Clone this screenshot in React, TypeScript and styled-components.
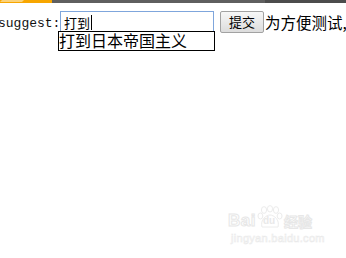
import React from "react";
import styled, { createGlobalStyle } from "styled-components";

const GlobalStyle = createGlobalStyle`
  html, body {
    margin: 0;
    padding: 0;
    background: #fff;
    overflow: hidden;
  }
  body {
    font-family: "Noto Sans CJK SC", "DejaVu Sans", sans-serif;
    color: #000;
  }
`;

const stripParts = [
  { color: "#f7a600", width: 52 },
  { color: "#5f5f5f", width: 213 },
  { color: "#4c4c4c", width: 81 },
];

export default function App() {
  return (
    <Page>
      <GlobalStyle />
      <TopStrip>
        <Flare />
        {stripParts.map((p, i) => (
          <StripPart key={i} $color={p.color} $width={p.width} />
        ))}
      </TopStrip>
      <FormRow>
        <Label>suggest:</Label>
        <InputWrap>
          <FakeInput>
            打到
            <Caret />
          </FakeInput>
          <Suggestions>
            <SuggestItem>打到日本帝国主义</SuggestItem>
          </Suggestions>
        </InputWrap>
        <SubmitButton>提交</SubmitButton>
        <Note>为方便测试,</Note>
      </FormRow>
      <Watermark>
        <LogoLine>
          <BaiText>Bai</BaiText>
          <Paw>
            <svg width="26" height="24" viewBox="0 0 26 24">
              <g fill="none" stroke="#e8e8e8" strokeWidth="1">
                <ellipse cx="7" cy="5" rx="2.6" ry="3.4" />
                <ellipse cx="13" cy="3.8" rx="2.6" ry="3.2" />
                <ellipse cx="19" cy="5" rx="2.6" ry="3.4" />
                <ellipse cx="3.4" cy="11" rx="2.4" ry="3" />
                <ellipse cx="22.6" cy="11" rx="2.4" ry="3" />
                <path d="M5 22 C3 15 9 10 13 10 C17 10 23 15 21 22 Z" />
              </g>
            </svg>
            <DuText>du</DuText>
          </Paw>
          <JingText>经验</JingText>
        </LogoLine>
        <SiteText>jingyan.baidu.com</SiteText>
      </Watermark>
    </Page>
  );
}

const Page = styled.div`
  position: relative;
  width: 346px;
  height: 258px;
  overflow: hidden;
`;

const TopStrip = styled.div`
  position: relative;
  display: flex;
  height: 3px;
  overflow: hidden;
`;

const StripPart = styled.div<{ $color: string; $width: number }>`
  flex: none;
  width: ${(p) => p.$width}px;
  background: ${(p) => p.$color};
`;

const Flare = styled.div`
  position: absolute;
  left: 4px;
  top: -6px;
  width: 22px;
  height: 8px;
  background: #fbd27a;
  transform: skewX(-45deg);
`;

const FormRow = styled.div`
  display: flex;
  align-items: flex-start;
  padding-top: 8px;
  margin-left: -2px;
`;

const Label = styled.span`
  font-family: "Liberation Mono", "DejaVu Sans Mono", monospace;
  font-size: 13px;
  line-height: 16px;
  margin-top: 5px;
  width: 62px;
  flex: none;
  color: #111;
  white-space: nowrap;
`;

const InputWrap = styled.div`
  position: relative;
  flex: none;
`;

const FakeInput = styled.div`
  box-sizing: border-box;
  width: 154px;
  height: 21px;
  border: 1px solid #7fa6dc;
  padding: 1px 0 0 3px;
  font-size: 13px;
  line-height: 17px;
  display: flex;
  align-items: center;
`;

const Caret = styled.span`
  display: inline-block;
  width: 1px;
  height: 15px;
  margin-left: 1px;
  background: #000;
`;

const Suggestions = styled.div`
  position: absolute;
  top: 20px;
  left: -2px;
  box-sizing: border-box;
  width: 157px;
  height: 20px;
  border: 1px solid #000;
  background: #fff;
`;

const SuggestItem = styled.div`
  font-size: 16px;
  line-height: 17px;
  white-space: nowrap;
`;

const SubmitButton = styled.button`
  flex: none;
  box-sizing: border-box;
  width: 44px;
  height: 22px;
  margin-left: 6px;
  padding: 0;
  border: 1px solid #a2a2a2;
  border-radius: 2px;
  background: linear-gradient(#f7f7f7, #dcdcdc);
  font-family: "Noto Sans CJK SC", sans-serif;
  font-size: 13px;
  line-height: 18px;
  color: #000;
`;

const Note = styled.span`
  flex: none;
  margin-left: 1px;
  margin-top: 1px;
  font-size: 15.5px;
  line-height: 20px;
  white-space: nowrap;
`;

const Watermark = styled.div`
  position: absolute;
  left: 228px;
  top: 203px;
  display: flex;
  flex-direction: column;
  opacity: 0.8;
`;

const LogoLine = styled.div`
  display: flex;
  align-items: flex-end;
  height: 26px;
`;

const BaiText = styled.span`
  font-family: "Liberation Sans", sans-serif;
  font-weight: bold;
  font-size: 17px;
  line-height: 17px;
  color: #fff;
  -webkit-text-stroke: 1px #e2e2e2;
  letter-spacing: 0.5px;
`;

const Paw = styled.span`
  position: relative;
  width: 26px;
  height: 24px;
  margin-left: 1px;
`;

const DuText = styled.span`
  position: absolute;
  left: 6px;
  top: 11px;
  font-family: "Liberation Sans", sans-serif;
  font-weight: bold;
  font-size: 10px;
  line-height: 10px;
  color: #e4e4e4;
`;

const JingText = styled.span`
  font-size: 14px;
  line-height: 16px;
  font-weight: bold;
  color: #fff;
  -webkit-text-stroke: 1px #e2e2e2;
  margin-left: 1px;
`;

const SiteText = styled.span`
  font-family: "Liberation Sans", sans-serif;
  font-size: 11px;
  line-height: 14px;
  margin-top: 2px;
  margin-left: 3px;
  color: #fff;
  -webkit-text-stroke: 0.6px #e6e6e6;
  letter-spacing: 0.3px;
`;
